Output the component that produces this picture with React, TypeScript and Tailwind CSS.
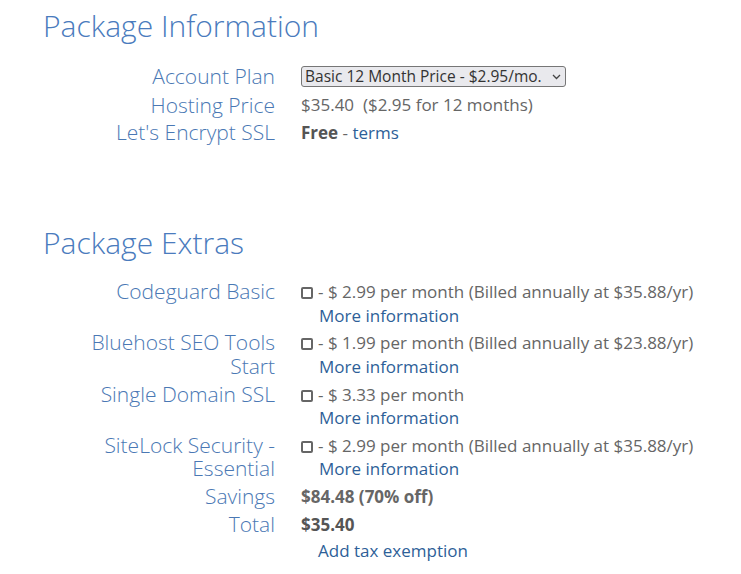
import React from "react";

const labelCls =
  "text-right text-[21px] font-light text-[#4a78b4] leading-[23.5px]";
const valCls = "text-[17px] text-[#666] leading-[23.5px]";

function Check() {
  return (
    <span className="inline-block w-[12px] h-[12px] border-[2px] border-[#666] rounded-[2px] mr-[5px] align-[-1px]" />
  );
}

function Extra({
  label,
  price,
}: {
  label: React.ReactNode;
  price: string;
}) {
  return (
    <>
      <div className={labelCls}>{label}</div>
      <div className={valCls}>
        <div className="whitespace-nowrap">
          <Check />- {price}
        </div>
        <div className="pl-[18px] text-[#2e5f98]">More information</div>
      </div>
    </>
  );
}

export default function App() {
  return (
    <div
      className="w-[741px] h-[574px] bg-white pl-[43px] pt-[6px]"
      style={{ fontFamily: '"Open Sans", "Noto Sans", sans-serif' }}
    >
      <h1 className="text-[30px] font-light text-[#4a7bbd] leading-[40px]">
        Package Information
      </h1>
      <div className="ml-[32px] mt-[16px] grid grid-cols-[200px_1fr] gap-x-[26px]">
        <div className="text-right text-[21px] font-light text-[#4a78b4] leading-[29px]">
          Account Plan
        </div>
        <div className="flex items-center">
          <div className="flex items-center w-[265px] h-[21px] border border-[#767676] rounded-[3px] bg-[#e9e9ed] pl-[3px] pr-[4px] text-[15.5px] text-[#333] leading-none whitespace-nowrap">
            <span className="flex-1">Basic 12 Month Price - $2.95/mo.</span>
            <svg width="9" height="6" viewBox="0 0 9 6" fill="none">
              <path d="M1 1l3.5 3.5L8 1" stroke="#444" strokeWidth="1.3" />
            </svg>
          </div>
        </div>
        <div className="text-right text-[21px] font-light text-[#4a78b4] leading-[28px]">
          Hosting Price
        </div>
        <div className="text-[17px] text-[#666] leading-[28px]">
          $35.40&nbsp; ($2.95 for 12 months)
        </div>
        <div className="text-right text-[21px] font-light text-[#4a78b4] leading-[27px]">
          Let's Encrypt SSL
        </div>
        <div className="text-[17px] text-[#666] leading-[27px]">
          <span className="font-bold text-[#555]">Free</span> -{" "}
          <span className="text-[#2e5f98]">terms</span>
        </div>
      </div>

      <h2 className="mt-[77px] text-[30px] font-light text-[#4a7bbd] leading-[40px]">
        Package Extras
      </h2>
      <div className="ml-[32px] mt-[17px] grid grid-cols-[200px_1fr] gap-x-[26px] gap-y-[4.25px]">
        <Extra
          label="Codeguard Basic"
          price="$ 2.99 per month (Billed annually at $35.88/yr)"
        />
        <Extra
          label="Bluehost SEO Tools Start"
          price="$ 1.99 per month (Billed annually at $23.88/yr)"
        />
        <Extra label="Single Domain SSL" price="$ 3.33 per month" />
        <Extra
          label="SiteLock Security - Essential"
          price="$ 2.99 per month (Billed annually at $35.88/yr)"
        />
        <div className={labelCls}>Savings</div>
        <div className={`${valCls} font-bold text-[#555]`}>
          $84.48 (70% off)
        </div>
        <div className={labelCls}>Total</div>
        <div className={valCls}>
          <div className="font-bold text-[#555]">$35.40</div>
          <div className="pl-[17px] mt-[3px] text-[#2e5f98]">
            Add tax exemption
          </div>
        </div>
      </div>
    </div>
  );
}
